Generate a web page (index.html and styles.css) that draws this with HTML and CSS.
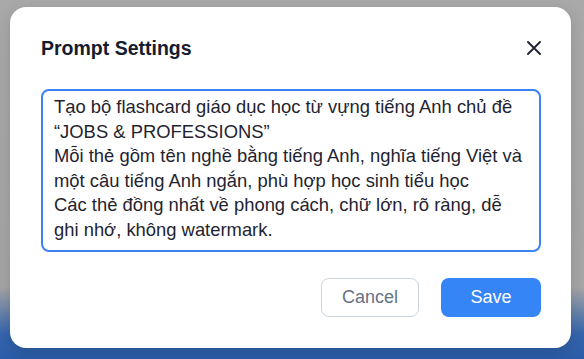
FILE: index.html
```html
<!DOCTYPE html>
<html lang="vi">
<head>
  <meta charset="UTF-8" />
  <meta name="viewport" content="width=device-width, initial-scale=1.0" />
  <title>Prompt Settings</title>
  <link rel="stylesheet" href="styles.css">
</head>
<body>
  <div class="overlay">
    <div class="modal">
      <div class="modal-header">
        <h2>Prompt Settings</h2>
        <button class="close" aria-label="Close">
          <svg width="14" height="14" viewBox="0 0 14 14">
            <path d="M1 1L13 13M13 1L1 13" stroke="#1e2433" stroke-width="1.9" stroke-linecap="round" fill="none"/>
          </svg>
        </button>
      </div>
      <textarea class="prompt">Tạo bộ flashcard giáo dục học từ vựng tiếng Anh chủ đề
“JOBS &amp; PROFESSIONS”
Mỗi thẻ gồm tên nghề bằng tiếng Anh, nghĩa tiếng Việt và
một câu tiếng Anh ngắn, phù hợp học sinh tiểu học
Các thẻ đồng nhất về phong cách, chữ lớn, rõ ràng, dễ
ghi nhớ, không watermark.</textarea>
      <div class="actions">
        <button class="btn cancel">Cancel</button>
        <button class="btn save">Save</button>
      </div>
    </div>
  </div>
</body>
</html>
```

FILE: styles.css
```css
html, body {
  margin: 0;
  height: 100%;
}
body {
  font-family: "Liberation Sans", Arial, sans-serif;
  background: linear-gradient(180deg, #a9a9a9 0%, #a6a6a6 80%, #3565ad 93%, #2b5ca7 100%);
}
.overlay {
  padding: 7px 13px 11px 10px;
}
.modal {
  background: #fff;
  border-radius: 16px;
  padding: 0 30px 31px 31px;
  box-shadow: 0 4px 16px rgba(0,0,0,0.15);
}
.modal-header {
  display: flex;
  justify-content: space-between;
  align-items: center;
  height: 82px;
}
.modal-header h2 {
  margin: 0;
  font-size: 19.5px;
  font-weight: 700;
  color: #161b2e;
}
.close {
  border: none;
  background: none;
  padding: 0;
  width: 20px;
  height: 20px;
  display: flex;
  align-items: center;
  justify-content: center;
  margin-right: -3px;
  cursor: pointer;
}
.prompt {
  display: block;
  box-sizing: border-box;
  width: 100%;
  height: 163px;
  border: 2px solid #3b82f6;
  border-radius: 8px;
  padding: 4px 6px 4px 11px;
  font-family: inherit;
  font-size: 18.4px;
  line-height: 24.6px;
  color: #1f2430;
  white-space: pre;
  resize: none;
  outline: none;
  overflow: hidden;
}
.actions {
  display: flex;
  justify-content: flex-end;
  gap: 22px;
  margin-top: 26px;
}
.btn {
  height: 39px;
  border-radius: 8px;
  font-family: inherit;
  font-size: 18px;
  cursor: pointer;
}
.cancel {
  width: 98px;
  background: #fff;
  border: 1px solid #cdd5e0;
  color: #667085;
}
.save {
  width: 100px;
  background: #3585f7;
  border: none;
  color: #fff;
}
```
